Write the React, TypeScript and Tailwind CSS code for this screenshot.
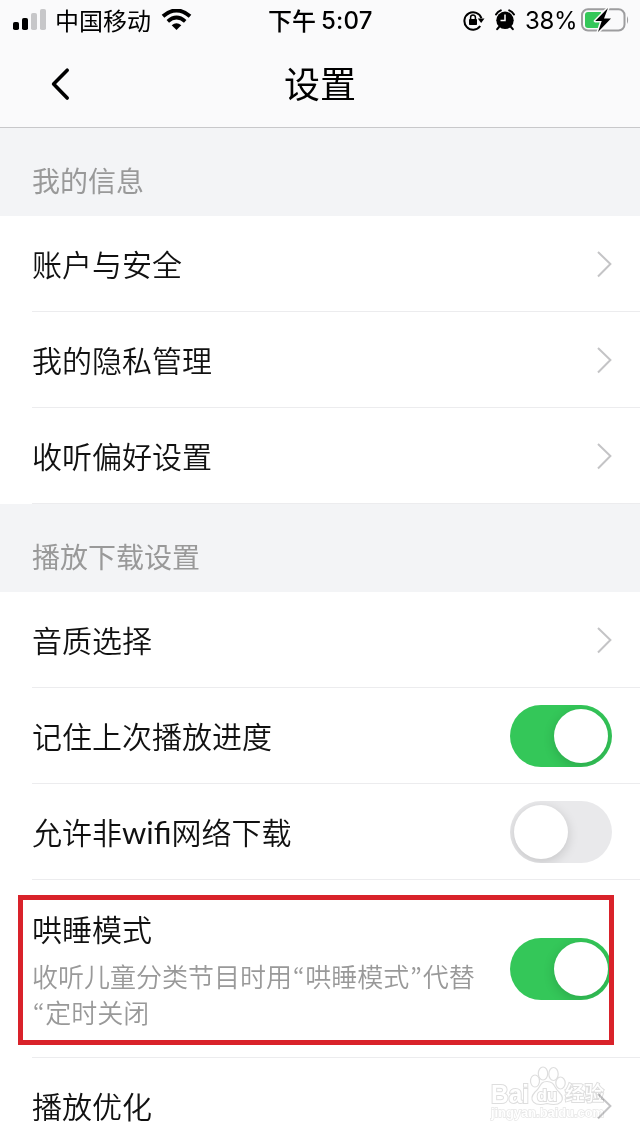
import type { ReactNode } from "react";

function Chevron() {
  return (
    <svg className="h-[28px] w-[18px] shrink-0" viewBox="0 0 18 28" fill="none" stroke="#c4c4c6" strokeWidth="2">
      <path d="M4 2 L16.4 14 L4 26.5" />
    </svg>
  );
}

function Toggle({ on }: { on: boolean }) {
  return (
    <div
      role="switch"
      aria-checked={on}
      className={
        on
          ? "flex h-[62px] w-[102px] shrink-0 items-center justify-end overflow-hidden rounded-full bg-[#34c759] px-[4px]"
          : "flex h-[62px] w-[102px] shrink-0 items-center justify-start overflow-hidden rounded-full bg-[#e9e9eb] px-[4px]"
      }
    >
      <div className="size-[54px] rounded-full bg-white shadow-[0_3px_12px_rgba(0,0,0,0.16)]" />
    </div>
  );
}

function Row({ label, children }: { label: ReactNode; children: ReactNode }) {
  return (
    <div className="ml-8 flex h-24 items-center justify-between border-b border-[#ececee] pr-7">
      <span className="pb-[2px] text-[30px] leading-[44px] text-[#111]">{label}</span>
      {children}
    </div>
  );
}

function SectionTitle({ children }: { children: ReactNode }) {
  return (
    <div className="flex h-[88px] items-center bg-[#f3f4f6] px-8 pt-[15px] text-[28px] font-normal leading-10 text-[#999]">
      {children}
    </div>
  );
}

function Quote({ children }: { children: ReactNode }) {
  return <span className="inline-block w-[13.3px] text-center font-['Noto_Sans_CJK_KR']" lang="ko">{children}</span>;
}

function StatusBar() {
  return (
    <div className="flex h-10 items-center pl-[13px] text-[24px] font-normal leading-10 text-black">
      <svg className="h-[22px] w-[34px]" viewBox="0 0 34 22">
        <rect x="0" y="13" width="6" height="8" rx="1.8" />
        <rect x="9" y="9" width="6" height="12" rx="1.8" />
        <rect x="18" y="4" width="6" height="17" rx="1.8" fill="#c7c7c9" />
        <rect x="27" y="0" width="6" height="21" rx="1.8" fill="#c7c7c9" />
      </svg>
      <span className="ml-[8px] w-[97px] pb-[1px]">中国移动</span>
      <svg className="ml-[9px] h-[22px] w-[31px]" viewBox="0 0 31 22" fill="none" stroke="#000">
        <path d="M2 7.3 Q15.5 -4.3 29 7.3" strokeWidth="4" />
        <path d="M6.8 12.4 Q15.5 4.7 24.2 12.4" strokeWidth="3.7" />
        <path d="M10.7 16.2 Q15.5 12.2 20.3 16.2 L15.5 21 Z" fill="#000" stroke="none" />
      </svg>
      <div className="ml-[76px] flex w-[112px] items-center font-medium">
        <span>下午</span>
        <span className="ml-[5px] pt-[1px] font-['Inter'] text-[24px] tracking-[0.2px]">5:07</span>
      </div>
      <svg className="ml-[83px] h-[24px] w-[22px]" viewBox="0 0 22 24" fill="none" stroke="#000" strokeWidth="2">
        <path d="M17.2 18 A8.7 8.7 0 1 1 18.4 10.3" />
        <path d="M14.8 10.5 L21.5 10.5 L18.1 15 Z" fill="#000" stroke="none" />
        <rect x="6" y="11" width="8" height="6" rx=".8" fill="#000" stroke="none" />
        <path d="M7.6 11 V9.3 a2.4 2.4 0 0 1 4.8 0 V11" strokeWidth="1.5" />
      </svg>
      <svg className="ml-[10px] h-[22px] w-[20px]" viewBox="0 0 20 22">
        <circle cx="10" cy="11.3" r="8.7" />
        <path d="M1 5.5 A10 10 0 0 1 5.8 1.3 M14.2 1.3 A10 10 0 0 1 19 5.5 M4 18 L2.2 20.2 M16 18 L17.8 20.2" fill="none" stroke="#000" strokeWidth="2" strokeLinecap="round" />
        <path d="M10 5.5 V11.5 H5.5" fill="none" stroke="#fff" strokeWidth="1.5" />
      </svg>
      <span className="ml-[10px] w-[51px] whitespace-nowrap pt-[2px] font-['Inter'] text-[24px] tracking-[-0.3px]">38%</span>
      <svg className="ml-[5px] h-[26px] w-[48px]" viewBox="0 0 48 26">
        <rect x="1" y="2.2" width="42.5" height="21.3" rx="6" fill="none" stroke="#9d9d9f" strokeWidth="2" />
        <path d="M7 5 H20 V21 H7 Q4 21 4 18 V8 Q4 5 7 5 Z" fill="#34c759" />
        <path d="M46 9 Q48.3 12.8 46 17 Z" fill="#9d9d9f" />
        <path d="M27 1 L14.2 14 H20.7 L17 25 L30 11.4 H23 Z" fill="#000" stroke="#fafafa" strokeWidth="3" strokeLinejoin="round" paintOrder="stroke" />
      </svg>
    </div>
  );
}

function Watermark() {
  return (
    <svg
      className="absolute left-[488px] top-[1064px] h-[64px] w-[122px] mix-blend-multiply"
      viewBox="0 0 122 64"
      fill="#fff"
      stroke="#dedede"
      strokeWidth="1.2"
    >
      <ellipse cx="47" cy="17" rx="4.5" ry="6" />
      <ellipse cx="55" cy="9.5" rx="4.7" ry="6.5" />
      <ellipse cx="65.5" cy="10" rx="4.7" ry="6.5" />
      <ellipse cx="72.5" cy="19" rx="4.7" ry="6" />
      <path d="M59 17.5 C67 17.5 66 24 71 28 C79 36 72 43 59 39.5 C46 43 40 36 47 28 C53 24 51 17.5 59 17.5 Z" />
      <g className="font-['Liberation_Sans'] font-bold" paintOrder="stroke" strokeWidth="2">
        <text x="3" y="38.5" fontSize="25" textLength="38" lengthAdjust="spacingAndGlyphs">Bai</text>
        <text x="49" y="36.5" fontSize="17" textLength="20" lengthAdjust="spacingAndGlyphs">du</text>
        <text x="3" y="53" fontSize="13.5" strokeWidth="1.4" stroke="#e6e6e6" textLength="113" lengthAdjust="spacingAndGlyphs">jingyan.baidu.com</text>
      </g>
      <text x="77" y="37" fontSize="20" className="font-medium" paintOrder="stroke" strokeWidth="2" textLength="39" lengthAdjust="spacingAndGlyphs">经验</text>
    </svg>
  );
}

export default function App() {
  return (
    <div lang="zh-CN" className="relative h-[1136px] w-[640px] overflow-hidden bg-white font-['Noto_Sans_CJK_SC',sans-serif] font-[350]">
      <header className="h-[128px] border-b border-[#c8c8ca] bg-[#fafafb]">
        <StatusBar />
        <div className="grid h-[87px] grid-cols-[120px_1fr_120px] items-center">
          <svg className="ml-[49px] h-[34px] w-[22px]" viewBox="0 0 22 34" fill="none" stroke="#000" strokeWidth="3.6" strokeLinecap="round" strokeLinejoin="round">
            <path d="M18.2 3.2 L4.6 17 L18.2 31" />
          </svg>
          <h1 className="pb-[3px] text-center text-[36px] font-normal leading-[52px] text-black">设置</h1>
        </div>
      </header>

      <SectionTitle>我的信息</SectionTitle>
      <Row label="账户与安全"><Chevron /></Row>
      <Row label="我的隐私管理"><Chevron /></Row>
      <Row label="收听偏好设置"><Chevron /></Row>

      <SectionTitle>播放下载设置</SectionTitle>
      <Row label="音质选择"><Chevron /></Row>
      <Row label="记住上次播放进度"><Toggle on /></Row>
      <Row label={<>允许非<span className="font-['Lato'] text-[31px] font-normal leading-none">wifi</span>网络下载</>}><Toggle on={false} /></Row>

      <div className="ml-8 flex h-[178px] items-center justify-between border-b border-[#ececee] pr-7">
        <div>
          <div className="text-[30px] leading-[42px] text-[#111]">哄睡模式</div>
          <p className="mb-px mt-[9px] whitespace-nowrap text-[26px] leading-9 text-[#999]">
            收听儿童分类节目时用<Quote>“</Quote>哄睡模式<Quote>”</Quote>代替
            <br />
            <Quote>“</Quote>定时关闭
          </p>
        </div>
        <Toggle on />
      </div>
      <Row label="播放优化"><Chevron /></Row>

      <div className="absolute left-[18px] top-[895px] h-[150px] w-[596px] border-[5px] border-[#d9222a]" />
      <Watermark />
    </div>
  );
}
